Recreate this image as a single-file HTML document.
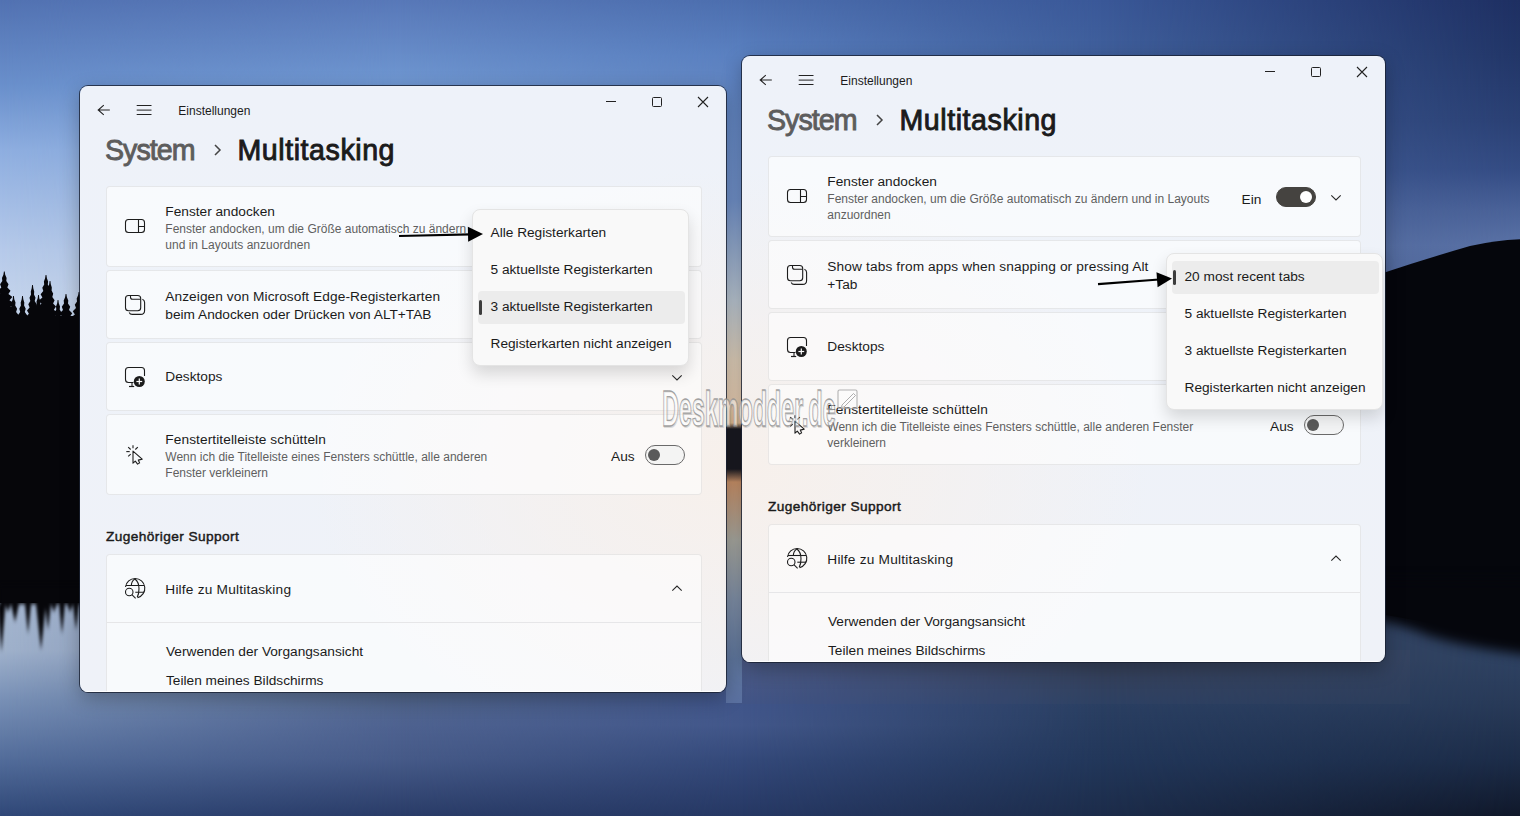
<!DOCTYPE html><html><head><meta charset="utf-8"><style>

*{margin:0;padding:0;box-sizing:border-box}
html,body{width:1520px;height:816px;overflow:hidden}
body{position:relative;font-family:"Liberation Sans", sans-serif;background:#3a5588}
.t{position:absolute;white-space:nowrap}
.i{position:absolute;overflow:visible}
.bx{position:absolute}
.win{position:absolute;border-radius:8px;overflow:hidden;
 background:#eef2f9;
 box-shadow:0 0 0 1px rgba(25,32,50,.8),0 6px 20px rgba(0,0,0,.28)}
.card{position:absolute;background:rgba(255,255,255,.58);border:1px solid rgba(0,0,0,.075);border-radius:4px}
.tg{position:absolute;width:40px;height:20px;border-radius:10px;border:1px solid #6a6a6a;background:rgba(240,240,240,.6)}
.tg.on{background:#454340;border-color:#454340}
.knob{position:absolute;width:12px;height:12px;border-radius:6px}
.pop{position:absolute;width:217px;height:157px;border-radius:8px;background:#f9f9f9;border:1px solid #e4e4e4;
 box-shadow:0 8px 16px rgba(0,0,0,.14)}
.hl{position:absolute;width:207px;height:33px;border-radius:4px;background:#ececec}
.acc{position:absolute;width:3px;height:15px;border-radius:2px;background:#3c3c3c}
.wm{position:absolute;font-family:"Liberation Sans", sans-serif;color:#fff;-webkit-text-stroke:1px #c0c0c0;white-space:nowrap}

</style></head><body>
<div class="bx" style="left:0;top:0;width:1520px;height:816px;background:linear-gradient(180deg,#5272b2 0px,#6a90cc 86px,#8eaee0 150px,#b6caea 250px,#c4d4ec 300px,#a0b2cc 650px,#7890b6 700px,#526c9a 760px,#304878 816px)"></div>
<div class="bx" style="left:0;top:0;width:1520px;height:816px;background:linear-gradient(180deg,#5878b8 0px,#7098d2 86px,#b0c0d8 300px,#66769c 650px,#52668a 691px,#4e6290 725px,#465a88 760px,#2a3c68 816px);-webkit-mask-image:linear-gradient(90deg,transparent 0px,#000 400px);mask-image:linear-gradient(90deg,transparent 0px,#000 400px)"></div>
<div class="bx" style="left:0;top:0;width:1520px;height:816px;background:linear-gradient(180deg,#4c6eae 0px,#5a80c0 56px,#90a0c0 300px,#4a5a88 662px,#40558a 703px,#42578a 725px,#34497a 760px,#263864 816px);-webkit-mask-image:linear-gradient(90deg,transparent 400px,#000 742px);mask-image:linear-gradient(90deg,transparent 400px,#000 742px)"></div>
<div class="bx" style="left:0;top:0;width:1520px;height:816px;background:linear-gradient(180deg,#3a5898 0px,#40609c 56px,#4a5a88 400px,#343f58 662px,#2a3f62 703px,#22375a 760px,#1c2c4a 816px);-webkit-mask-image:linear-gradient(90deg,transparent 742px,#000 1100px);mask-image:linear-gradient(90deg,transparent 742px,#000 1100px)"></div>
<div class="bx" style="left:0;top:0;width:1520px;height:816px;background:linear-gradient(180deg,#1e2f62 0px,#223668 56px,#2a4074 120px,#344c84 170px,#4a6298 210px,#5a72a6 245px,#2e4262 600px,#2e4262 660px,#283a58 703px,#1c2c48 760px,#10182a 816px);-webkit-mask-image:linear-gradient(90deg,transparent 1100px,#000 1520px);mask-image:linear-gradient(90deg,transparent 1100px,#000 1520px)"></div>

<svg class="i" style="left:0;top:0" width="1520" height="816">
 <defs>
  <filter id="bl" color-interpolation-filters="sRGB" x="-20%" y="-20%" width="140%" height="140%"><feGaussianBlur stdDeviation="1.6 2.2"/></filter>
  <filter id="bl2" color-interpolation-filters="sRGB" x="-20%" y="-20%" width="140%" height="140%"><feGaussianBlur stdDeviation="3 6"/></filter>
  <linearGradient id="lk" x1="0" y1="0" x2="0" y2="1"><stop offset="0" stop-color="#07070b"/><stop offset="1" stop-color="#0a0a12"/></linearGradient>
 </defs>
 <path d="M4.3 271.5 L4.7 271.5 L5.2 274.7 L6.6 277.9 L6.3 281.1 L8.5 284.3 L7.3 287.5 L10.5 290.7 L8.4 293.9 L12.4 297.1 L9.5 300.3 L14.3 303.5 L10.5 306.7 L16.2 309.9 L11.6 313.1 L18.1 316.3 L12.6 319.5 L20.1 322.7 L13.7 325.9 L22.0 329.1 L21.9 330.0 L-13.2 330.0 L-13.4 329.1 L-5.1 325.9 L-11.5 322.7 L-4.0 319.5 L-9.5 316.3 L-3.0 313.1 L-7.6 309.9 L-1.9 306.7 L-5.7 303.5 L-0.9 300.3 L-3.8 297.1 L0.2 293.9 L-1.9 290.7 L1.3 287.5 L0.1 284.3 L2.3 281.1 L2.0 277.9 L3.4 274.7 L3.9 271.5 Z M13.5 296.0 L13.9 296.0 L14.3 299.2 L15.5 302.4 L15.2 305.6 L17.1 308.8 L16.1 312.0 L18.7 315.2 L17.0 318.4 L20.3 321.6 L17.9 324.8 L21.9 328.0 L22.0 330.0 L5.0 330.0 L5.1 328.0 L9.1 324.8 L6.7 321.6 L10.0 318.4 L8.3 315.2 L10.9 312.0 L9.9 308.8 L11.8 305.6 L11.5 302.4 L12.7 299.2 L13.1 296.0 Z M22.5 296.0 L22.9 296.0 L23.3 299.2 L24.3 302.4 L24.1 305.6 L25.7 308.8 L24.8 312.0 L27.1 315.2 L25.6 318.4 L28.5 321.6 L26.4 324.8 L29.9 328.0 L30.0 330.0 L15.0 330.0 L15.1 328.0 L18.6 324.8 L16.5 321.6 L19.4 318.4 L17.9 315.2 L20.2 312.0 L19.3 308.8 L20.9 305.6 L20.7 302.4 L21.7 299.2 L22.1 296.0 Z M32.5 285.0 L32.9 285.0 L33.3 288.2 L34.2 291.4 L34.0 294.6 L35.5 297.8 L34.7 301.0 L36.7 304.2 L35.4 307.4 L38.0 310.6 L36.1 313.8 L39.3 317.0 L36.8 320.2 L40.6 323.4 L37.5 326.6 L41.9 329.8 L41.5 330.0 L23.5 330.0 L23.1 329.8 L27.5 326.6 L24.4 323.4 L28.2 320.2 L25.7 317.0 L28.9 313.8 L27.0 310.6 L29.6 307.4 L28.3 304.2 L30.3 301.0 L29.5 297.8 L31.0 294.6 L30.8 291.4 L31.7 288.2 L32.1 285.0 Z M38.5 295.0 L38.9 295.0 L39.3 298.2 L40.5 301.4 L40.2 304.6 L42.1 307.8 L41.1 311.0 L43.7 314.2 L42.0 317.4 L45.3 320.6 L42.9 323.8 L46.9 327.0 L47.2 330.0 L29.8 330.0 L30.1 327.0 L34.1 323.8 L31.7 320.6 L35.0 317.4 L33.3 314.2 L35.9 311.0 L34.9 307.8 L36.8 304.6 L36.5 301.4 L37.7 298.2 L38.1 295.0 Z M46.0 275.0 L46.4 275.0 L46.9 278.2 L48.1 281.4 L47.8 284.6 L49.7 287.8 L48.7 291.0 L51.4 294.2 L49.6 297.4 L53.1 300.6 L50.5 303.8 L54.7 307.0 L51.4 310.2 L56.4 313.4 L52.3 316.6 L58.0 319.8 L53.3 323.0 L59.7 326.2 L54.2 329.4 L60.3 330.0 L31.7 330.0 L37.8 329.4 L32.3 326.2 L38.7 323.0 L34.0 319.8 L39.7 316.6 L35.6 313.4 L40.6 310.2 L37.3 307.0 L41.5 303.8 L38.9 300.6 L42.4 297.4 L40.6 294.2 L43.3 291.0 L42.3 287.8 L44.2 284.6 L43.9 281.4 L45.1 278.2 L45.6 275.0 Z M50.0 281.0 L50.4 281.0 L50.8 284.2 L51.8 287.4 L51.6 290.6 L53.2 293.8 L52.3 297.0 L54.6 300.2 L53.1 303.4 L56.0 306.6 L53.9 309.8 L57.4 313.0 L54.7 316.2 L58.8 319.4 L55.4 322.6 L60.3 325.8 L56.2 329.0 L60.8 330.0 L39.2 330.0 L43.8 329.0 L39.7 325.8 L44.6 322.6 L41.2 319.4 L45.3 316.2 L42.6 313.0 L46.1 309.8 L44.0 306.6 L46.9 303.4 L45.4 300.2 L47.7 297.0 L46.8 293.8 L48.4 290.6 L48.2 287.4 L49.2 284.2 L49.6 281.0 Z M58.0 300.0 L58.4 300.0 L58.8 303.2 L60.0 306.4 L59.7 309.6 L61.6 312.8 L60.6 316.0 L63.2 319.2 L61.5 322.4 L64.8 325.6 L62.4 328.8 L65.5 330.0 L50.5 330.0 L53.6 328.8 L51.2 325.6 L54.5 322.4 L52.8 319.2 L55.4 316.0 L54.4 312.8 L56.3 309.6 L56.0 306.4 L57.2 303.2 L57.6 300.0 Z M66.0 294.0 L66.4 294.0 L66.9 297.2 L68.3 300.4 L68.0 303.6 L70.2 306.8 L69.0 310.0 L72.2 313.2 L70.1 316.4 L74.1 319.6 L71.2 322.8 L76.0 326.0 L72.2 329.2 L76.8 330.0 L55.2 330.0 L59.8 329.2 L56.0 326.0 L60.8 322.8 L57.9 319.6 L61.9 316.4 L59.8 313.2 L63.0 310.0 L61.8 306.8 L64.0 303.6 L63.7 300.4 L65.1 297.2 L65.6 294.0 Z M79.0 292.0 L79.4 292.0 L79.9 295.2 L81.3 298.4 L81.0 301.6 L83.2 304.8 L82.0 308.0 L85.2 311.2 L83.1 314.4 L87.1 317.6 L84.2 320.8 L89.0 324.0 L85.2 327.2 L90.4 330.0 L67.6 330.0 L72.8 327.2 L69.0 324.0 L73.8 320.8 L70.9 317.6 L74.9 314.4 L72.8 311.2 L76.0 308.0 L74.8 304.8 L77.0 301.6 L76.7 298.4 L78.1 295.2 L78.6 292.0 Z M0 316 L84 316 L84 603 L0 603 Z" fill="#06060a"/>
 <path filter="url(#bl)" d="M0 585 L84 585 L84 606 L79 604 L76 630 L73 604 L73 604 L70 612 L67 604 L65 604 L62 634 L59 604 L57 604 L54 612 L51 604 L51 604 L48 630 L45 604 L46 604 L41 650 L36 604 L31 604 L28 634 L25 604 L19 604 L15 622 L11 604 L11 604 L8 612 L5 604 L5.5 604 L1.5 652 L-2.5 604 L0 604 Z" fill="#06060a"/>
 <path d="M1380 274 Q1425 259 1470 246 Q1500 239 1530 239 L1530 640 L1380 614 Z" fill="#05060c"/>
 <path filter="url(#bl2)" d="M1380 580 L1530 580 L1530 655 Q1470 648 1430 636 Q1400 624 1380 621 Z" fill="#05060c"/>
</svg>
<div class="bx" style="left:730px;top:650px;width:680px;height:54px;background:rgba(85,90,105,.1)"></div>
<div class="bx" style="left:726px;top:56px;width:16px;height:647px;background:linear-gradient(180deg,#5a80c0 0px,#7090c8 144px,#b8c4d0 244px,#ddcdb8 304px,#e4cab0 344px,#e0b890 367px,#1a1a22 373px,#1a1a22 413px,#c89068 426px,#a8a8a0 484px,#8090a8 544px,#6078a0 604px,#5a70a0 647px)"></div>


<div class="win" style="left:80px;top:86px;width:646px;height:606px;background:radial-gradient(ellipse 420px 300px at 650px 384px,#f7f0eb 0%,rgba(247,240,235,.6) 45%,rgba(238,242,249,0) 100%),linear-gradient(180deg,#eef2f9,#eff2f8)">
<svg class="i" style="left:17px;top:18px" width="14" height="12" viewBox="0 0 14 12"><path d="M6.8 1.1 L1.2 6 L6.8 10.9 M1.5 6 H12.8" fill="none" stroke="#222" stroke-width="1.1"/></svg>
<svg class="i" style="left:56px;top:18px" width="16" height="12" viewBox="0 0 16 12"><path d="M0.7 1.5 H15.5 M0.7 6.1 H15.5 M0.7 10.5 H15.5" fill="none" stroke="#222" stroke-width="1"/></svg>
<div class="t" style="left:98.3px;top:18.00px;font-size:12px;line-height:14.40px;color:#1b1b1b;font-weight:normal;">Einstellungen</div>
<div class="bx" style="left:526px;top:15px;width:10px;height:1px;background:#222"></div>
<div class="bx" style="left:572px;top:11px;width:10px;height:10px;border:1.1px solid #222;border-radius:1.5px"></div>
<svg class="i" style="left:617px;top:10px" width="12" height="12" viewBox="0 0 12 12"><path d="M1 1 L11 11 M11 1 L1 11" fill="none" stroke="#222" stroke-width="1.1"/></svg>
<div class="t" style="left:25.0px;top:46.83px;font-size:28.6px;line-height:34.32px;color:#5d5d5d;font-weight:normal;-webkit-text-stroke:0.9px #5d5d5d;letter-spacing:-0.95px">System</div>
<svg class="i" style="left:133px;top:58px" width="10" height="12" viewBox="0 0 10 12"><path d="M2 1 L7 6 L2 11" fill="none" stroke="#444" stroke-width="1.5"/></svg>
<div class="t" style="left:157.5px;top:46.83px;font-size:28.6px;line-height:34.32px;color:#1b1b1b;font-weight:normal;-webkit-text-stroke:0.9px #1b1b1b;letter-spacing:0.55px">Multitasking</div>
<div class="card" style="left:26px;top:100px;width:596px;height:81px"></div>
<div class="card" style="left:26px;top:184px;width:596px;height:69px"></div>
<div class="card" style="left:26px;top:256px;width:596px;height:69px"></div>
<div class="card" style="left:26px;top:328px;width:596px;height:81px"></div>
<svg class="i" style="left:38px;top:124px" width="34" height="34" viewBox="0 0 34 34">
<rect x="7.5" y="9.5" width="19" height="13" rx="3" fill="none" stroke="#1c1c1c" stroke-width="1.1"/>
<line x1="20.5" y1="9.5" x2="20.5" y2="22.5" stroke="#1c1c1c" stroke-width="1.1"/>
<line x1="20.5" y1="16.5" x2="26.5" y2="16.5" stroke="#1c1c1c" stroke-width="1.1"/></svg>
<div class="t" style="left:85.3px;top:117.79px;font-size:13.7px;line-height:16.44px;color:#1b1b1b;font-weight:normal;">Fenster andocken</div>
<svg class="i" style="left:38px;top:201px" width="34" height="34" viewBox="0 0 34 34">
<rect x="7.5" y="8.5" width="15.2" height="15.2" rx="3" fill="none" stroke="#1c1c1c" stroke-width="1.1"/>
<path d="M12.5 8.5 V10.3 Q12.5 12.3 14.5 12.3 H22.6" fill="none" stroke="#1c1c1c" stroke-width="1.1"/>
<path d="M24.4 12.2 Q26.6 13 26.6 15.5 V23.5 Q26.6 27.4 22.7 27.4 H14.2 Q12 27.4 11.2 25.5" fill="none" stroke="#1c1c1c" stroke-width="1.1"/></svg>
<svg class="i" style="left:38px;top:273px" width="34" height="34" viewBox="0 0 34 34">
<path d="M26.5 17 V11.5 Q26.5 8.5 23.5 8.5 H10.5 Q7.5 8.5 7.5 11.5 V20.5 Q7.5 23.5 10.5 23.5 H15.5" fill="none" stroke="#1c1c1c" stroke-width="1.1"/>
<line x1="14" y1="23.5" x2="14" y2="27.3" stroke="#1c1c1c" stroke-width="1.1"/>
<line x1="11" y1="27.5" x2="16.2" y2="27.5" stroke="#1c1c1c" stroke-width="1.2"/>
<circle cx="21.3" cy="22.5" r="5.5" fill="#1c1c1c"/>
<line x1="21.3" y1="19.6" x2="21.3" y2="25.4" stroke="#fff" stroke-width="1.2"/>
<line x1="18.4" y1="22.5" x2="24.2" y2="22.5" stroke="#fff" stroke-width="1.2"/></svg>
<div class="t" style="left:85.3px;top:283.38px;font-size:13.7px;line-height:16.44px;color:#1b1b1b;font-weight:normal;">Desktops</div>
<svg class="i" style="left:38px;top:351px" width="34" height="34" viewBox="0 0 34 34">
<path d="M15 14.2 L15 26.2 L17.3 24.2 L19.6 27.1 L21.6 25.9 L20.3 23.1 L24.2 22.1 Z" fill="none" stroke="#1c1c1c" stroke-width="1.1" stroke-linejoin="round"/>
<line x1="15" y1="8.3" x2="15" y2="11.3" stroke="#1c1c1c" stroke-width="1.1"/>
<line x1="10.2" y1="10.2" x2="12.7" y2="12.5" stroke="#1c1c1c" stroke-width="1.1"/>
<line x1="8.3" y1="14.6" x2="11.7" y2="14.6" stroke="#1c1c1c" stroke-width="1.1"/>
<line x1="10.2" y1="19.4" x2="12.7" y2="17.1" stroke="#1c1c1c" stroke-width="1.1"/>
<line x1="17.3" y1="12.5" x2="19.8" y2="10.2" stroke="#1c1c1c" stroke-width="1.1"/></svg>
<div class="t" style="left:85.3px;top:346.29px;font-size:13.7px;line-height:16.44px;color:#1b1b1b;font-weight:normal;letter-spacing:0.085px">Fenstertitelleiste schütteln</div>
<div class="t" style="left:531.0px;top:363.19px;font-size:13.7px;line-height:16.44px;color:#1b1b1b;font-weight:normal;">Aus</div>
<div class="tg" style="left:565px;top:359px"></div><div class="knob" style="left:568px;top:363px;background:#5a5a5a"></div>
<div class="t" style="left:26.0px;top:443.29px;font-size:13.7px;line-height:16.44px;color:#1b1b1b;font-weight:normal;-webkit-text-stroke:0.45px #1b1b1b;letter-spacing:0.4px">Zugehöriger Support</div>
<div class="card sup" style="left:26px;top:468px;width:596px;height:148px"></div>
<div class="bx" style="left:27px;top:536px;width:594px;height:1px;background:#e6e6e8"></div>
<svg class="i" style="left:38px;top:486px" width="34" height="34" viewBox="0 0 34 34">
<path d="M7.5 15 A9.7 9.7 0 1 1 19.6 25.6" fill="none" stroke="#1c1c1c" stroke-width="1.1"/>
<path d="M16.9 7 Q13.6 8.8 13.3 13.5" fill="none" stroke="#1c1c1c" stroke-width="1.1"/>
<path d="M16.9 7 Q21 10 21 16.7 Q21 22 19.2 25.2" fill="none" stroke="#1c1c1c" stroke-width="1.1"/>
<line x1="7.9" y1="13.5" x2="26.2" y2="13.5" stroke="#1c1c1c" stroke-width="1.1"/>
<line x1="17.3" y1="20.2" x2="26.2" y2="20.2" stroke="#1c1c1c" stroke-width="1.1"/>
<circle cx="11.25" cy="20" r="3.75" fill="none" stroke="#1c1c1c" stroke-width="1.1"/>
<line x1="13.9" y1="22.7" x2="17.6" y2="26.4" stroke="#1c1c1c" stroke-width="1.1"/></svg>
<div class="t" style="left:85.3px;top:495.99px;font-size:13.7px;line-height:16.44px;color:#1b1b1b;font-weight:normal;letter-spacing:0.2px">Hilfe zu Multitasking</div>
<svg class="i" style="left:589.9px;top:498.3px" width="14" height="9" viewBox="0 0 14 9"><path d="M2.3 6.7 L7 2 L11.7 6.7" fill="none" stroke="#2a2a2a" stroke-width="1.1"/></svg>
<div class="t" style="left:86.0px;top:557.99px;font-size:13.7px;line-height:16.44px;color:#1b1b1b;font-weight:normal;">Verwenden der Vorgangsansicht</div>
<div class="t" style="left:86.0px;top:586.59px;font-size:13.7px;line-height:16.44px;color:#1b1b1b;font-weight:normal;">Teilen meines Bildschirms</div>
<div class="t" style="left:85.3px;top:136.10px;font-size:12px;line-height:14.40px;color:#5f5f5f;font-weight:normal;">Fenster andocken, um die Größe automatisch zu ändern</div>
<div class="t" style="left:85.3px;top:152.10px;font-size:12px;line-height:14.40px;color:#5f5f5f;font-weight:normal;">und in Layouts anzuordnen</div>
<div class="t" style="left:85.3px;top:203.49px;font-size:13.7px;line-height:16.44px;color:#1b1b1b;font-weight:normal;letter-spacing:0.076px">Anzeigen von Microsoft Edge-Registerkarten</div>
<div class="t" style="left:85.3px;top:220.99px;font-size:13.7px;line-height:16.44px;color:#1b1b1b;font-weight:normal;">beim Andocken oder Drücken von ALT+TAB</div>
<svg class="i" style="left:589.8px;top:286.5px" width="14" height="9" viewBox="0 0 14 9"><path d="M2.3 2.3 L7 7 L11.7 2.3" fill="none" stroke="#2a2a2a" stroke-width="1.1"/></svg>
<div class="t" style="left:85.3px;top:363.60px;font-size:12px;line-height:14.40px;color:#5f5f5f;font-weight:normal;">Wenn ich die Titelleiste eines Fensters schüttle, alle anderen</div>
<div class="t" style="left:85.3px;top:379.60px;font-size:12px;line-height:14.40px;color:#5f5f5f;font-weight:normal;">Fenster verkleinern</div>
<div class="bx" style="left:0;top:605px;width:646px;height:1px;background:rgba(255,255,255,.9)"></div>
</div>
<div class="win" style="left:742px;top:56px;width:643px;height:606px;background:radial-gradient(ellipse 420px 300px at -12px 414px,#f7f0eb 0%,rgba(247,240,235,.6) 45%,rgba(238,242,249,0) 100%),linear-gradient(180deg,#eef2f9,#eff2f8)">
<svg class="i" style="left:17px;top:18px" width="14" height="12" viewBox="0 0 14 12"><path d="M6.8 1.1 L1.2 6 L6.8 10.9 M1.5 6 H12.8" fill="none" stroke="#222" stroke-width="1.1"/></svg>
<svg class="i" style="left:56px;top:18px" width="16" height="12" viewBox="0 0 16 12"><path d="M0.7 1.5 H15.5 M0.7 6.1 H15.5 M0.7 10.5 H15.5" fill="none" stroke="#222" stroke-width="1"/></svg>
<div class="t" style="left:98.3px;top:18.00px;font-size:12px;line-height:14.40px;color:#1b1b1b;font-weight:normal;">Einstellungen</div>
<div class="bx" style="left:523px;top:15px;width:10px;height:1px;background:#222"></div>
<div class="bx" style="left:569px;top:11px;width:10px;height:10px;border:1.1px solid #222;border-radius:1.5px"></div>
<svg class="i" style="left:614px;top:10px" width="12" height="12" viewBox="0 0 12 12"><path d="M1 1 L11 11 M11 1 L1 11" fill="none" stroke="#222" stroke-width="1.1"/></svg>
<div class="t" style="left:25.0px;top:46.83px;font-size:28.6px;line-height:34.32px;color:#5d5d5d;font-weight:normal;-webkit-text-stroke:0.9px #5d5d5d;letter-spacing:-0.95px">System</div>
<svg class="i" style="left:133px;top:58px" width="10" height="12" viewBox="0 0 10 12"><path d="M2 1 L7 6 L2 11" fill="none" stroke="#444" stroke-width="1.5"/></svg>
<div class="t" style="left:157.5px;top:46.83px;font-size:28.6px;line-height:34.32px;color:#1b1b1b;font-weight:normal;-webkit-text-stroke:0.9px #1b1b1b;letter-spacing:0.55px">Multitasking</div>
<div class="card" style="left:26px;top:100px;width:593px;height:81px"></div>
<div class="card" style="left:26px;top:184px;width:593px;height:69px"></div>
<div class="card" style="left:26px;top:256px;width:593px;height:69px"></div>
<div class="card" style="left:26px;top:328px;width:593px;height:81px"></div>
<svg class="i" style="left:38px;top:124px" width="34" height="34" viewBox="0 0 34 34">
<rect x="7.5" y="9.5" width="19" height="13" rx="3" fill="none" stroke="#1c1c1c" stroke-width="1.1"/>
<line x1="20.5" y1="9.5" x2="20.5" y2="22.5" stroke="#1c1c1c" stroke-width="1.1"/>
<line x1="20.5" y1="16.5" x2="26.5" y2="16.5" stroke="#1c1c1c" stroke-width="1.1"/></svg>
<div class="t" style="left:85.3px;top:117.79px;font-size:13.7px;line-height:16.44px;color:#1b1b1b;font-weight:normal;">Fenster andocken</div>
<svg class="i" style="left:38px;top:201px" width="34" height="34" viewBox="0 0 34 34">
<rect x="7.5" y="8.5" width="15.2" height="15.2" rx="3" fill="none" stroke="#1c1c1c" stroke-width="1.1"/>
<path d="M12.5 8.5 V10.3 Q12.5 12.3 14.5 12.3 H22.6" fill="none" stroke="#1c1c1c" stroke-width="1.1"/>
<path d="M24.4 12.2 Q26.6 13 26.6 15.5 V23.5 Q26.6 27.4 22.7 27.4 H14.2 Q12 27.4 11.2 25.5" fill="none" stroke="#1c1c1c" stroke-width="1.1"/></svg>
<svg class="i" style="left:38px;top:273px" width="34" height="34" viewBox="0 0 34 34">
<path d="M26.5 17 V11.5 Q26.5 8.5 23.5 8.5 H10.5 Q7.5 8.5 7.5 11.5 V20.5 Q7.5 23.5 10.5 23.5 H15.5" fill="none" stroke="#1c1c1c" stroke-width="1.1"/>
<line x1="14" y1="23.5" x2="14" y2="27.3" stroke="#1c1c1c" stroke-width="1.1"/>
<line x1="11" y1="27.5" x2="16.2" y2="27.5" stroke="#1c1c1c" stroke-width="1.2"/>
<circle cx="21.3" cy="22.5" r="5.5" fill="#1c1c1c"/>
<line x1="21.3" y1="19.6" x2="21.3" y2="25.4" stroke="#fff" stroke-width="1.2"/>
<line x1="18.4" y1="22.5" x2="24.2" y2="22.5" stroke="#fff" stroke-width="1.2"/></svg>
<div class="t" style="left:85.3px;top:283.38px;font-size:13.7px;line-height:16.44px;color:#1b1b1b;font-weight:normal;">Desktops</div>
<svg class="i" style="left:38px;top:351px" width="34" height="34" viewBox="0 0 34 34">
<path d="M15 14.2 L15 26.2 L17.3 24.2 L19.6 27.1 L21.6 25.9 L20.3 23.1 L24.2 22.1 Z" fill="none" stroke="#1c1c1c" stroke-width="1.1" stroke-linejoin="round"/>
<line x1="15" y1="8.3" x2="15" y2="11.3" stroke="#1c1c1c" stroke-width="1.1"/>
<line x1="10.2" y1="10.2" x2="12.7" y2="12.5" stroke="#1c1c1c" stroke-width="1.1"/>
<line x1="8.3" y1="14.6" x2="11.7" y2="14.6" stroke="#1c1c1c" stroke-width="1.1"/>
<line x1="10.2" y1="19.4" x2="12.7" y2="17.1" stroke="#1c1c1c" stroke-width="1.1"/>
<line x1="17.3" y1="12.5" x2="19.8" y2="10.2" stroke="#1c1c1c" stroke-width="1.1"/></svg>
<div class="t" style="left:85.3px;top:346.29px;font-size:13.7px;line-height:16.44px;color:#1b1b1b;font-weight:normal;letter-spacing:0.085px">Fenstertitelleiste schütteln</div>
<div class="t" style="left:528.0px;top:363.19px;font-size:13.7px;line-height:16.44px;color:#1b1b1b;font-weight:normal;">Aus</div>
<div class="tg" style="left:562px;top:359px"></div><div class="knob" style="left:565px;top:363px;background:#5a5a5a"></div>
<div class="t" style="left:26.0px;top:443.29px;font-size:13.7px;line-height:16.44px;color:#1b1b1b;font-weight:normal;-webkit-text-stroke:0.45px #1b1b1b;letter-spacing:0.4px">Zugehöriger Support</div>
<div class="card sup" style="left:26px;top:468px;width:593px;height:148px"></div>
<div class="bx" style="left:27px;top:536px;width:591px;height:1px;background:#e6e6e8"></div>
<svg class="i" style="left:38px;top:486px" width="34" height="34" viewBox="0 0 34 34">
<path d="M7.5 15 A9.7 9.7 0 1 1 19.6 25.6" fill="none" stroke="#1c1c1c" stroke-width="1.1"/>
<path d="M16.9 7 Q13.6 8.8 13.3 13.5" fill="none" stroke="#1c1c1c" stroke-width="1.1"/>
<path d="M16.9 7 Q21 10 21 16.7 Q21 22 19.2 25.2" fill="none" stroke="#1c1c1c" stroke-width="1.1"/>
<line x1="7.9" y1="13.5" x2="26.2" y2="13.5" stroke="#1c1c1c" stroke-width="1.1"/>
<line x1="17.3" y1="20.2" x2="26.2" y2="20.2" stroke="#1c1c1c" stroke-width="1.1"/>
<circle cx="11.25" cy="20" r="3.75" fill="none" stroke="#1c1c1c" stroke-width="1.1"/>
<line x1="13.9" y1="22.7" x2="17.6" y2="26.4" stroke="#1c1c1c" stroke-width="1.1"/></svg>
<div class="t" style="left:85.3px;top:495.99px;font-size:13.7px;line-height:16.44px;color:#1b1b1b;font-weight:normal;letter-spacing:0.2px">Hilfe zu Multitasking</div>
<svg class="i" style="left:586.9px;top:498.3px" width="14" height="9" viewBox="0 0 14 9"><path d="M2.3 6.7 L7 2 L11.7 6.7" fill="none" stroke="#2a2a2a" stroke-width="1.1"/></svg>
<div class="t" style="left:86.0px;top:557.99px;font-size:13.7px;line-height:16.44px;color:#1b1b1b;font-weight:normal;">Verwenden der Vorgangsansicht</div>
<div class="t" style="left:86.0px;top:586.59px;font-size:13.7px;line-height:16.44px;color:#1b1b1b;font-weight:normal;">Teilen meines Bildschirms</div>
<div class="t" style="left:85.3px;top:136.10px;font-size:12px;line-height:14.40px;color:#5f5f5f;font-weight:normal;">Fenster andocken, um die Größe automatisch zu ändern und in Layouts</div>
<div class="t" style="left:85.3px;top:152.10px;font-size:12px;line-height:14.40px;color:#5f5f5f;font-weight:normal;">anzuordnen</div>
<div class="t" style="left:499.5px;top:135.79px;font-size:13.7px;line-height:16.44px;color:#1b1b1b;font-weight:normal;">Ein</div>
<div class="tg on" style="left:534px;top:131px"></div><div class="knob" style="left:558px;top:135px;background:#fff"></div>
<svg class="i" style="left:586.9px;top:136.5px" width="14" height="9" viewBox="0 0 14 9"><path d="M2.3 2.3 L7 7 L11.7 2.3" fill="none" stroke="#2a2a2a" stroke-width="1.1"/></svg>
<div class="t" style="left:85.3px;top:203.29px;font-size:13.7px;line-height:16.44px;color:#1b1b1b;font-weight:normal;letter-spacing:0.127px">Show tabs from apps when snapping or pressing Alt</div>
<div class="t" style="left:85.3px;top:220.69px;font-size:13.7px;line-height:16.44px;color:#1b1b1b;font-weight:normal;">+Tab</div>
<div class="t" style="left:85.3px;top:363.60px;font-size:12px;line-height:14.40px;color:#5f5f5f;font-weight:normal;">Wenn ich die Titelleiste eines Fensters schüttle, alle anderen Fenster</div>
<div class="t" style="left:85.3px;top:379.60px;font-size:12px;line-height:14.40px;color:#5f5f5f;font-weight:normal;">verkleinern</div>
<div class="bx" style="left:0;top:605px;width:643px;height:1px;background:rgba(255,255,255,.9)"></div>
</div>
<div class="pop" style="left:472px;top:209px"></div>
<div class="t" style="left:490.5px;top:225.19px;font-size:13.7px;line-height:16.44px;color:#1b1b1b;font-weight:normal;">Alle Registerkarten</div>
<div class="t" style="left:490.5px;top:262.19px;font-size:13.7px;line-height:16.44px;color:#1b1b1b;font-weight:normal;">5 aktuellste Registerkarten</div>
<div class="hl" style="left:478px;top:291.2px"></div>
<div class="acc" style="left:479px;top:300.2px"></div>
<div class="t" style="left:490.5px;top:299.19px;font-size:13.7px;line-height:16.44px;color:#1b1b1b;font-weight:normal;">3 aktuellste Registerkarten</div>
<div class="t" style="left:490.5px;top:336.19px;font-size:13.7px;line-height:16.44px;color:#1b1b1b;font-weight:normal;">Registerkarten nicht anzeigen</div>
<div class="pop" style="left:1166px;top:252.5px"></div>
<div class="hl" style="left:1172px;top:260.7px"></div>
<div class="acc" style="left:1173px;top:269.7px"></div>
<div class="t" style="left:1184.5px;top:268.69px;font-size:13.7px;line-height:16.44px;color:#1b1b1b;font-weight:normal;">20 most recent tabs</div>
<div class="t" style="left:1184.5px;top:305.69px;font-size:13.7px;line-height:16.44px;color:#1b1b1b;font-weight:normal;">5 aktuellste Registerkarten</div>
<div class="t" style="left:1184.5px;top:342.69px;font-size:13.7px;line-height:16.44px;color:#1b1b1b;font-weight:normal;">3 aktuellste Registerkarten</div>
<div class="t" style="left:1184.5px;top:379.69px;font-size:13.7px;line-height:16.44px;color:#1b1b1b;font-weight:normal;">Registerkarten nicht anzeigen</div>
<svg class="i" style="left:0;top:0" width="1520" height="816"><line x1="399" y1="236" x2="470.0036832413262" y2="234.30943611330176" stroke="#000" stroke-width="2.2"/><path d="M483 234 L468.1827707284351 241.85491672227536 L467.82572905924076 226.8591666161133 Z" fill="#000"/></svg>
<svg class="i" style="left:0;top:0" width="1520" height="816"><line x1="1098" y1="284.2" x2="1159.0383947911143" y2="279.4983939147385" stroke="#000" stroke-width="2.2"/><path d="M1172 278.5 L1157.6202981713272 287.1298421375169 L1156.4683051927827 272.1741438195719 Z" fill="#000"/></svg>
<svg class="i" style="left:0;top:0" width="1520" height="816"><g transform="translate(662,425.7) scale(0.466,1)"><text x="1.5" y="1" font-family="Liberation Sans" font-size="50" font-weight="bold" fill="none" stroke="rgba(90,90,90,.2)" stroke-width="1.4" vector-effect="non-scaling-stroke">Deskmodder.de</text><text x="0" y="0" font-family="Liberation Sans" font-size="50" font-weight="bold" fill="rgba(255,255,255,.5)" stroke="rgba(140,140,140,.8)" stroke-width="1" vector-effect="non-scaling-stroke">Deskmodder.de</text></g><rect x="838" y="390" width="19" height="18.5" rx="1.5" fill="rgba(255,255,255,.3)" stroke="rgba(160,160,160,.8)" stroke-width="1.1"/><path d="M842 405 L853.5 393.5 L855.5 395.5 L844 407 L841.5 407.5 Z" fill="rgba(255,255,255,.4)" stroke="rgba(160,160,160,.85)" stroke-width="1"/></svg>
</body></html>
